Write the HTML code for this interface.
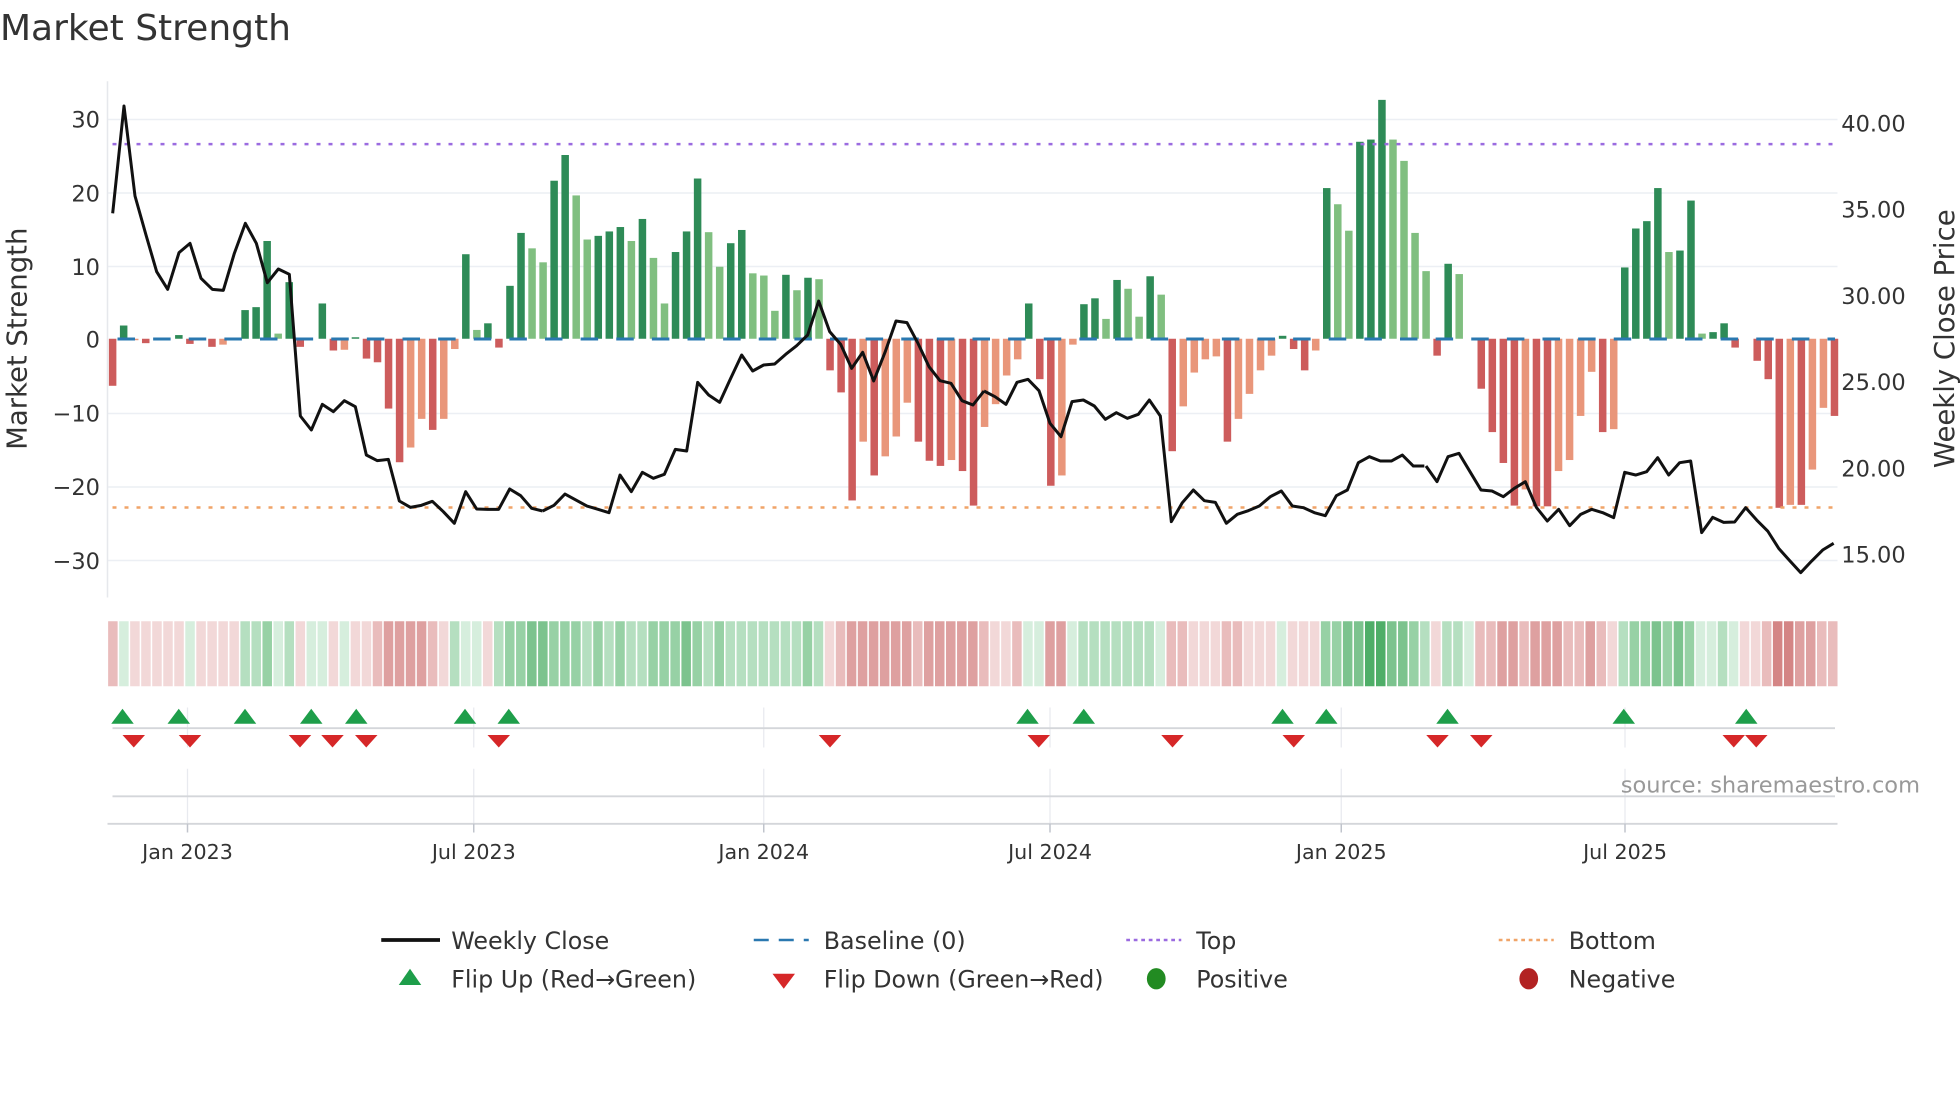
<!DOCTYPE html>
<html><head><meta charset="utf-8"><style>
html,body{margin:0;padding:0;background:#fff;overflow:hidden}
svg{display:block}
text{font-family:"DejaVu Sans","Liberation Sans",sans-serif;fill:#333}
.a{fill:#2e8b57}.b{fill:#80bf80}.c{fill:#cd5c5c}.d{fill:#e9967a}
.g1{fill:#d6eedd}.g2{fill:#b5dfc0}.g3{fill:#97d1a5}.g4{fill:#7cc38e}.g5{fill:#4fae68}
.r1{fill:#f2d8d8}.r2{fill:#e9bcbc}.r3{fill:#dea0a0}.r4{fill:#d48585}
</style></head><body>
<svg width="1960" height="1102" viewBox="0 0 1568 881.6" xmlns="http://www.w3.org/2000/svg">
<text x="0" y="32" font-size="28.8">Market Strength</text>
<g stroke="#eceff4" stroke-width="1.2">
<line x1="86" x2="1470" y1="95.6" y2="95.6"/><line x1="86" x2="1470" y1="154.4" y2="154.4"/><line x1="86" x2="1470" y1="213.2" y2="213.2"/><line x1="86" x2="1470" y1="330.8" y2="330.8"/><line x1="86" x2="1470" y1="389.6" y2="389.6"/><line x1="86" x2="1470" y1="448.4" y2="448.4"/>
</g>
<line x1="86" x2="86" y1="65" y2="478" stroke="#e6e8ec" stroke-width="1.2"/>
<g font-size="18" text-anchor="end">
<text x="80" y="102">30</text><text x="80" y="161">20</text><text x="80" y="220">10</text><text x="80" y="278">0</text><text x="80" y="337">−10</text><text x="80" y="396">−20</text><text x="80" y="455">−30</text>
</g>
<g font-size="18">
<text x="1473" y="105">40.00</text><text x="1473" y="174">35.00</text><text x="1473" y="243">30.00</text><text x="1473" y="312">25.00</text><text x="1473" y="381">20.00</text><text x="1473" y="450">15.00</text>
</g>
<text transform="translate(21,271) rotate(-90)" font-size="22" text-anchor="middle">Market Strength</text>
<text transform="translate(1563,271) rotate(-90)" font-size="22" text-anchor="middle">Weekly Close Price</text>
<g transform="translate(90.1,271) scale(8.83,-5.88)">
<rect class="c" x="-.34" y="-6.4" width=".68" height="6.4"/>
<rect class="a" x=".66" y="0" width=".68" height="1.8"/>
<rect class="d" x="1.66" y="-.2" width=".68" height=".2"/>
<rect class="c" x="2.66" y="-.6" width=".68" height=".6"/>
<rect class="a" x="5.66" y="0" width=".68" height=".5"/>
<rect class="c" x="6.66" y="-.7" width=".68" height=".7"/>
<rect class="c" x="8.66" y="-1.1" width=".68" height="1.1"/>
<rect class="d" x="9.66" y="-.8" width=".68" height=".8"/>
<rect class="c" x="10.66" y="-.1" width=".68" height=".1"/>
<rect class="a" x="11.66" y="0" width=".68" height="3.9"/>
<rect class="a" x="12.66" y="0" width=".68" height="4.3"/>
<rect class="a" x="13.66" y="0" width=".68" height="13.3"/>
<rect class="b" x="14.66" y="0" width=".68" height=".7"/>
<rect class="a" x="15.66" y="0" width=".68" height="7.7"/>
<rect class="c" x="16.66" y="-1.1" width=".68" height="1.1"/>
<rect class="a" x="18.66" y="0" width=".68" height="4.8"/>
<rect class="c" x="19.66" y="-1.6" width=".68" height="1.6"/>
<rect class="d" x="20.66" y="-1.5" width=".68" height="1.5"/>
<rect class="a" x="21.66" y="0" width=".68" height=".2"/>
<rect class="c" x="22.66" y="-2.7" width=".68" height="2.7"/>
<rect class="c" x="23.66" y="-3.2" width=".68" height="3.2"/>
<rect class="c" x="24.66" y="-9.5" width=".68" height="9.5"/>
<rect class="c" x="25.66" y="-16.8" width=".68" height="16.8"/>
<rect class="d" x="26.66" y="-14.8" width=".68" height="14.8"/>
<rect class="d" x="27.66" y="-10.9" width=".68" height="10.9"/>
<rect class="c" x="28.66" y="-12.4" width=".68" height="12.4"/>
<rect class="d" x="29.66" y="-10.9" width=".68" height="10.9"/>
<rect class="d" x="30.66" y="-1.4" width=".68" height="1.4"/>
<rect class="a" x="31.66" y="0" width=".68" height="11.5"/>
<rect class="b" x="32.66" y="0" width=".68" height="1.2"/>
<rect class="a" x="33.66" y="0" width=".68" height="2.1"/>
<rect class="c" x="34.66" y="-1.2" width=".68" height="1.2"/>
<rect class="a" x="35.66" y="0" width=".68" height="7.2"/>
<rect class="a" x="36.66" y="0" width=".68" height="14.4"/>
<rect class="b" x="37.66" y="0" width=".68" height="12.3"/>
<rect class="b" x="38.66" y="0" width=".68" height="10.4"/>
<rect class="a" x="39.66" y="0" width=".68" height="21.5"/>
<rect class="a" x="40.66" y="0" width=".68" height="25"/>
<rect class="b" x="41.66" y="0" width=".68" height="19.5"/>
<rect class="b" x="42.66" y="0" width=".68" height="13.5"/>
<rect class="a" x="43.66" y="0" width=".68" height="14"/>
<rect class="a" x="44.66" y="0" width=".68" height="14.6"/>
<rect class="a" x="45.66" y="0" width=".68" height="15.2"/>
<rect class="b" x="46.66" y="0" width=".68" height="13.3"/>
<rect class="a" x="47.66" y="0" width=".68" height="16.3"/>
<rect class="b" x="48.66" y="0" width=".68" height="11"/>
<rect class="b" x="49.66" y="0" width=".68" height="4.8"/>
<rect class="a" x="50.66" y="0" width=".68" height="11.8"/>
<rect class="a" x="51.66" y="0" width=".68" height="14.6"/>
<rect class="a" x="52.66" y="0" width=".68" height="21.8"/>
<rect class="b" x="53.66" y="0" width=".68" height="14.5"/>
<rect class="b" x="54.66" y="0" width=".68" height="9.8"/>
<rect class="a" x="55.66" y="0" width=".68" height="13"/>
<rect class="a" x="56.66" y="0" width=".68" height="14.8"/>
<rect class="b" x="57.66" y="0" width=".68" height="8.9"/>
<rect class="b" x="58.66" y="0" width=".68" height="8.6"/>
<rect class="b" x="59.66" y="0" width=".68" height="3.8"/>
<rect class="a" x="60.66" y="0" width=".68" height="8.7"/>
<rect class="b" x="61.66" y="0" width=".68" height="6.6"/>
<rect class="a" x="62.66" y="0" width=".68" height="8.3"/>
<rect class="b" x="63.66" y="0" width=".68" height="8.1"/>
<rect class="c" x="64.66" y="-4.3" width=".68" height="4.3"/>
<rect class="c" x="65.66" y="-7.3" width=".68" height="7.3"/>
<rect class="c" x="66.66" y="-22" width=".68" height="22"/>
<rect class="d" x="67.66" y="-14" width=".68" height="14"/>
<rect class="c" x="68.66" y="-18.6" width=".68" height="18.6"/>
<rect class="d" x="69.66" y="-16" width=".68" height="16"/>
<rect class="d" x="70.66" y="-13.3" width=".68" height="13.3"/>
<rect class="d" x="71.66" y="-8.7" width=".68" height="8.7"/>
<rect class="c" x="72.66" y="-14" width=".68" height="14"/>
<rect class="c" x="73.66" y="-16.6" width=".68" height="16.6"/>
<rect class="c" x="74.66" y="-17.3" width=".68" height="17.3"/>
<rect class="d" x="75.66" y="-16.5" width=".68" height="16.5"/>
<rect class="c" x="76.66" y="-18" width=".68" height="18"/>
<rect class="c" x="77.66" y="-22.7" width=".68" height="22.7"/>
<rect class="d" x="78.66" y="-12" width=".68" height="12"/>
<rect class="d" x="79.66" y="-8.9" width=".68" height="8.9"/>
<rect class="d" x="80.66" y="-5" width=".68" height="5"/>
<rect class="d" x="81.66" y="-2.8" width=".68" height="2.8"/>
<rect class="a" x="82.66" y="0" width=".68" height="4.8"/>
<rect class="c" x="83.66" y="-5.5" width=".68" height="5.5"/>
<rect class="c" x="84.66" y="-20" width=".68" height="20"/>
<rect class="d" x="85.66" y="-18.6" width=".68" height="18.6"/>
<rect class="d" x="86.66" y="-.8" width=".68" height=".8"/>
<rect class="a" x="87.66" y="0" width=".68" height="4.7"/>
<rect class="a" x="88.66" y="0" width=".68" height="5.5"/>
<rect class="b" x="89.66" y="0" width=".68" height="2.7"/>
<rect class="a" x="90.66" y="0" width=".68" height="8"/>
<rect class="b" x="91.66" y="0" width=".68" height="6.8"/>
<rect class="b" x="92.66" y="0" width=".68" height="3"/>
<rect class="a" x="93.66" y="0" width=".68" height="8.5"/>
<rect class="b" x="94.66" y="0" width=".68" height="6"/>
<rect class="c" x="95.66" y="-15.3" width=".68" height="15.3"/>
<rect class="d" x="96.66" y="-9.2" width=".68" height="9.2"/>
<rect class="d" x="97.66" y="-4.6" width=".68" height="4.6"/>
<rect class="d" x="98.66" y="-2.8" width=".68" height="2.8"/>
<rect class="d" x="99.66" y="-2.4" width=".68" height="2.4"/>
<rect class="c" x="100.66" y="-14" width=".68" height="14"/>
<rect class="d" x="101.66" y="-10.9" width=".68" height="10.9"/>
<rect class="d" x="102.66" y="-7.5" width=".68" height="7.5"/>
<rect class="d" x="103.66" y="-4.3" width=".68" height="4.3"/>
<rect class="d" x="104.66" y="-2.3" width=".68" height="2.3"/>
<rect class="a" x="105.66" y="0" width=".68" height=".4"/>
<rect class="c" x="106.66" y="-1.4" width=".68" height="1.4"/>
<rect class="c" x="107.66" y="-4.3" width=".68" height="4.3"/>
<rect class="d" x="108.66" y="-1.6" width=".68" height="1.6"/>
<rect class="a" x="109.66" y="0" width=".68" height="20.5"/>
<rect class="b" x="110.66" y="0" width=".68" height="18.3"/>
<rect class="b" x="111.66" y="0" width=".68" height="14.7"/>
<rect class="a" x="112.66" y="0" width=".68" height="26.8"/>
<rect class="a" x="113.66" y="0" width=".68" height="27.1"/>
<rect class="a" x="114.66" y="0" width=".68" height="32.5"/>
<rect class="b" x="115.66" y="0" width=".68" height="27.1"/>
<rect class="b" x="116.66" y="0" width=".68" height="24.2"/>
<rect class="b" x="117.66" y="0" width=".68" height="14.4"/>
<rect class="b" x="118.66" y="0" width=".68" height="9.2"/>
<rect class="c" x="119.66" y="-2.3" width=".68" height="2.3"/>
<rect class="a" x="120.66" y="0" width=".68" height="10.2"/>
<rect class="b" x="121.66" y="0" width=".68" height="8.8"/>
<rect class="c" x="123.66" y="-6.8" width=".68" height="6.8"/>
<rect class="c" x="124.66" y="-12.7" width=".68" height="12.7"/>
<rect class="c" x="125.66" y="-16.9" width=".68" height="16.9"/>
<rect class="c" x="126.66" y="-22.7" width=".68" height="22.7"/>
<rect class="d" x="127.66" y="-20.5" width=".68" height="20.5"/>
<rect class="c" x="128.66" y="-22.8" width=".68" height="22.8"/>
<rect class="c" x="129.66" y="-22.8" width=".68" height="22.8"/>
<rect class="d" x="130.66" y="-18" width=".68" height="18"/>
<rect class="d" x="131.66" y="-16.5" width=".68" height="16.5"/>
<rect class="d" x="132.66" y="-10.5" width=".68" height="10.5"/>
<rect class="d" x="133.66" y="-4.5" width=".68" height="4.5"/>
<rect class="c" x="134.66" y="-12.7" width=".68" height="12.7"/>
<rect class="d" x="135.66" y="-12.3" width=".68" height="12.3"/>
<rect class="a" x="136.66" y="0" width=".68" height="9.7"/>
<rect class="a" x="137.66" y="0" width=".68" height="15"/>
<rect class="a" x="138.66" y="0" width=".68" height="16"/>
<rect class="a" x="139.66" y="0" width=".68" height="20.5"/>
<rect class="b" x="140.66" y="0" width=".68" height="11.8"/>
<rect class="a" x="141.66" y="0" width=".68" height="12"/>
<rect class="a" x="142.66" y="0" width=".68" height="18.8"/>
<rect class="b" x="143.66" y="0" width=".68" height=".7"/>
<rect class="a" x="144.66" y="0" width=".68" height=".9"/>
<rect class="a" x="145.66" y="0" width=".68" height="2.1"/>
<rect class="c" x="146.66" y="-1.2" width=".68" height="1.2"/>
<rect class="c" x="148.66" y="-3" width=".68" height="3"/>
<rect class="c" x="149.66" y="-5.5" width=".68" height="5.5"/>
<rect class="c" x="150.66" y="-23" width=".68" height="23"/>
<rect class="d" x="151.66" y="-22.6" width=".68" height="22.6"/>
<rect class="c" x="152.66" y="-22.6" width=".68" height="22.6"/>
<rect class="d" x="153.66" y="-17.8" width=".68" height="17.8"/>
<rect class="d" x="154.66" y="-9.4" width=".68" height="9.4"/>
<rect class="c" x="155.66" y="-10.5" width=".68" height="10.5"/>
</g>
<line x1="90" x2="1468" y1="271.2" y2="271.2" stroke="#2a78b0" stroke-width="2.4" stroke-dasharray="14 14.5" stroke-dashoffset="24.5"/>
<line x1="90" x2="1468" y1="115.3" y2="115.3" stroke="#9b6be0" stroke-width="2" stroke-dasharray="3.2 6.4"/>
<line x1="90" x2="1468" y1="406" y2="406" stroke="#f0a468" stroke-width="2" stroke-dasharray="3.2 6.4"/>
<g fill="none" stroke="#111" stroke-width="3" stroke-linejoin="round">
<polyline vector-effect="non-scaling-stroke" transform="translate(80,72) scale(.26667)" points="38,370 72,48 105,318 138,435 170,545 203,598 237,488 270,460 303,565 337,598 370,601 403,490 436,400 469,460 502,578 535,537 568,553 601,978 634,1020 667,943 700,965 733,932 766,950 799,1095 832,1112 865,1108 898,1233 931,1252 964,1246 997,1234 1030,1265 1063,1300 1097,1205 1130,1257 1163,1258 1196,1258 1229,1197 1262,1217 1295,1255 1328,1263"/>
<polyline vector-effect="non-scaling-stroke" transform="translate(432,72) scale(.26667)" points="8,1263 42,1246 75,1212 108,1230 141,1248 174,1258 207,1268 240,1155 274,1205 307,1147 340,1165 373,1153 406,1078 440,1083 473,877 506,915 539,937 572,865 605,795 638,843 671,825 704,822 737,793 770,767 803,735 836,633 869,725 902,763 935,835 968,787 1001,873 1035,787 1068,693 1101,698 1134,760 1167,830 1200,872 1233,880 1266,932 1299,945 1332,903"/>
<polyline vector-effect="non-scaling-stroke" transform="translate(784,72) scale(.26667)" points="12,903 45,920 78,943 111,877 144,868 177,902 210,1000 243,1040 276,935 310,930 343,948 376,988 409,968 442,985 475,973 508,930 541,978 574,1295 607,1238 640,1200 673,1232 706,1237 739,1300 772,1273 805,1262 838,1248 871,1220 904,1203 937,1248 970,1253 1003,1268 1036,1277 1069,1217 1102,1200 1135,1118 1168,1100 1201,1113 1234,1113 1267,1095 1300,1128 1333,1128"/>
<polyline vector-effect="non-scaling-stroke" transform="translate(1136,72) scale(.26667)" points="18,1128 51,1175 84,1100 117,1090 150,1145 183,1200 216,1203 250,1220 283,1195 316,1175 349,1252 382,1293 416,1258 449,1307 482,1273 515,1258 548,1268 581,1283 614,1147 647,1155 680,1145 713,1103 746,1155 779,1118 812,1113 845,1328 878,1282 911,1297 944,1296 977,1253 1010,1290 1043,1323 1076,1375 1109,1412 1142,1448 1175,1413 1208,1380 1241,1360"/>
</g>
<g transform="translate(86.5,497)">
<rect class="r2" x="0" width="7.6" height="52"/><rect class="g1" x="8.82" width="7.6" height="52"/><rect class="r1" x="17.64" width="7.6" height="52"/><rect class="r1" x="26.46" width="7.6" height="52"/><rect class="r1" x="35.28" width="7.6" height="52"/><rect class="r1" x="44.1" width="7.6" height="52"/><rect class="r1" x="52.92" width="7.6" height="52"/><rect class="g1" x="61.74" width="7.6" height="52"/><rect class="r1" x="70.56" width="7.6" height="52"/><rect class="r1" x="79.38" width="7.6" height="52"/>
<rect class="r1" x="88.2" width="7.6" height="52"/><rect class="r1" x="97.02" width="7.6" height="52"/><rect class="g2" x="105.84" width="7.6" height="52"/><rect class="g2" x="114.66" width="7.6" height="52"/><rect class="g3" x="123.48" width="7.6" height="52"/><rect class="g1" x="132.3" width="7.6" height="52"/><rect class="g2" x="141.12" width="7.6" height="52"/><rect class="r1" x="149.94" width="7.6" height="52"/><rect class="g1" x="158.76" width="7.6" height="52"/><rect class="g1" x="167.58" width="7.6" height="52"/>
<rect class="r1" x="176.4" width="7.6" height="52"/><rect class="g1" x="185.22" width="7.6" height="52"/><rect class="r1" x="194.04" width="7.6" height="52"/><rect class="r1" x="202.86" width="7.6" height="52"/><rect class="r2" x="211.68" width="7.6" height="52"/><rect class="r3" x="220.5" width="7.6" height="52"/><rect class="r3" x="229.32" width="7.6" height="52"/><rect class="r3" x="238.14" width="7.6" height="52"/><rect class="r3" x="246.96" width="7.6" height="52"/><rect class="r2" x="255.78" width="7.6" height="52"/>
<rect class="r1" x="264.6" width="7.6" height="52"/><rect class="g2" x="273.42" width="7.6" height="52"/><rect class="g1" x="282.24" width="7.6" height="52"/><rect class="g1" x="291.06" width="7.6" height="52"/><rect class="r1" x="299.88" width="7.6" height="52"/><rect class="g2" x="308.7" width="7.6" height="52"/><rect class="g3" x="317.52" width="7.6" height="52"/><rect class="g3" x="326.34" width="7.6" height="52"/><rect class="g4" x="335.16" width="7.6" height="52"/><rect class="g4" x="343.98" width="7.6" height="52"/>
<rect class="g3" x="352.8" width="7.6" height="52"/><rect class="g3" x="361.62" width="7.6" height="52"/><rect class="g3" x="370.44" width="7.6" height="52"/><rect class="g2" x="379.26" width="7.6" height="52"/><rect class="g3" x="388.08" width="7.6" height="52"/><rect class="g2" x="396.9" width="7.6" height="52"/><rect class="g3" x="405.72" width="7.6" height="52"/><rect class="g2" x="414.54" width="7.6" height="52"/><rect class="g2" x="423.36" width="7.6" height="52"/><rect class="g3" x="432.18" width="7.6" height="52"/>
<rect class="g3" x="441" width="7.6" height="52"/><rect class="g3" x="449.82" width="7.6" height="52"/><rect class="g4" x="458.64" width="7.6" height="52"/><rect class="g3" x="467.46" width="7.6" height="52"/><rect class="g2" x="476.28" width="7.6" height="52"/><rect class="g3" x="485.1" width="7.6" height="52"/><rect class="g2" x="493.92" width="7.6" height="52"/><rect class="g2" x="502.74" width="7.6" height="52"/><rect class="g2" x="511.56" width="7.6" height="52"/><rect class="g2" x="520.38" width="7.6" height="52"/>
<rect class="g2" x="529.2" width="7.6" height="52"/><rect class="g2" x="538.02" width="7.6" height="52"/><rect class="g2" x="546.84" width="7.6" height="52"/><rect class="g3" x="555.66" width="7.6" height="52"/><rect class="g2" x="564.48" width="7.6" height="52"/><rect class="r1" x="573.3" width="7.6" height="52"/><rect class="r2" x="582.12" width="7.6" height="52"/><rect class="r3" x="590.94" width="7.6" height="52"/><rect class="r3" x="599.76" width="7.6" height="52"/><rect class="r3" x="608.58" width="7.6" height="52"/>
<rect class="r3" x="617.4" width="7.6" height="52"/><rect class="r3" x="626.22" width="7.6" height="52"/><rect class="r3" x="635.04" width="7.6" height="52"/><rect class="r2" x="643.86" width="7.6" height="52"/><rect class="r3" x="652.68" width="7.6" height="52"/><rect class="r3" x="661.5" width="7.6" height="52"/><rect class="r3" x="670.32" width="7.6" height="52"/><rect class="r3" x="679.14" width="7.6" height="52"/><rect class="r3" x="687.96" width="7.6" height="52"/><rect class="r2" x="696.78" width="7.6" height="52"/>
<rect class="r1" x="705.6" width="7.6" height="52"/><rect class="r1" x="714.42" width="7.6" height="52"/><rect class="r2" x="723.24" width="7.6" height="52"/><rect class="g1" x="732.06" width="7.6" height="52"/><rect class="g1" x="740.88" width="7.6" height="52"/><rect class="r3" x="749.7" width="7.6" height="52"/><rect class="r3" x="758.52" width="7.6" height="52"/><rect class="g1" x="767.34" width="7.6" height="52"/><rect class="g2" x="776.16" width="7.6" height="52"/><rect class="g2" x="784.98" width="7.6" height="52"/>
<rect class="g2" x="793.8" width="7.6" height="52"/><rect class="g2" x="802.62" width="7.6" height="52"/><rect class="g2" x="811.44" width="7.6" height="52"/><rect class="g2" x="820.26" width="7.6" height="52"/><rect class="g2" x="829.08" width="7.6" height="52"/><rect class="g1" x="837.9" width="7.6" height="52"/><rect class="r2" x="846.72" width="7.6" height="52"/><rect class="r2" x="855.54" width="7.6" height="52"/><rect class="r1" x="864.36" width="7.6" height="52"/><rect class="r1" x="873.18" width="7.6" height="52"/>
<rect class="r1" x="882" width="7.6" height="52"/><rect class="r2" x="890.82" width="7.6" height="52"/><rect class="r2" x="899.64" width="7.6" height="52"/><rect class="r1" x="908.46" width="7.6" height="52"/><rect class="r1" x="917.28" width="7.6" height="52"/><rect class="r1" x="926.1" width="7.6" height="52"/><rect class="g1" x="934.92" width="7.6" height="52"/><rect class="r1" x="943.74" width="7.6" height="52"/><rect class="r1" x="952.56" width="7.6" height="52"/><rect class="r1" x="961.38" width="7.6" height="52"/>
<rect class="g3" x="970.2" width="7.6" height="52"/><rect class="g3" x="979.02" width="7.6" height="52"/><rect class="g4" x="987.84" width="7.6" height="52"/><rect class="g4" x="996.66" width="7.6" height="52"/><rect class="g5" x="1005.48" width="7.6" height="52"/><rect class="g5" x="1014.3" width="7.6" height="52"/><rect class="g4" x="1023.12" width="7.6" height="52"/><rect class="g4" x="1031.94" width="7.6" height="52"/><rect class="g3" x="1040.76" width="7.6" height="52"/><rect class="g2" x="1049.58" width="7.6" height="52"/>
<rect class="r1" x="1058.4" width="7.6" height="52"/><rect class="g2" x="1067.22" width="7.6" height="52"/><rect class="g2" x="1076.04" width="7.6" height="52"/><rect class="g1" x="1084.86" width="7.6" height="52"/><rect class="r2" x="1093.68" width="7.6" height="52"/><rect class="r2" x="1102.5" width="7.6" height="52"/><rect class="r3" x="1111.32" width="7.6" height="52"/><rect class="r3" x="1120.14" width="7.6" height="52"/><rect class="r2" x="1128.96" width="7.6" height="52"/><rect class="r3" x="1137.78" width="7.6" height="52"/>
<rect class="r3" x="1146.6" width="7.6" height="52"/><rect class="r3" x="1155.42" width="7.6" height="52"/><rect class="r2" x="1164.24" width="7.6" height="52"/><rect class="r2" x="1173.06" width="7.6" height="52"/><rect class="r3" x="1181.88" width="7.6" height="52"/><rect class="r2" x="1190.7" width="7.6" height="52"/><rect class="r1" x="1199.52" width="7.6" height="52"/><rect class="g2" x="1208.34" width="7.6" height="52"/><rect class="g3" x="1217.16" width="7.6" height="52"/><rect class="g3" x="1225.98" width="7.6" height="52"/>
<rect class="g4" x="1234.8" width="7.6" height="52"/><rect class="g3" x="1243.62" width="7.6" height="52"/><rect class="g4" x="1252.44" width="7.6" height="52"/><rect class="g3" x="1261.26" width="7.6" height="52"/><rect class="g1" x="1270.08" width="7.6" height="52"/><rect class="g1" x="1278.9" width="7.6" height="52"/><rect class="g2" x="1287.72" width="7.6" height="52"/><rect class="g1" x="1296.54" width="7.6" height="52"/><rect class="r1" x="1305.36" width="7.6" height="52"/><rect class="r1" x="1314.18" width="7.6" height="52"/>
<rect class="r2" x="1323" width="7.6" height="52"/><rect class="r4" x="1331.82" width="7.6" height="52"/><rect class="r4" x="1340.64" width="7.6" height="52"/><rect class="r3" x="1349.46" width="7.6" height="52"/><rect class="r3" x="1358.28" width="7.6" height="52"/><rect class="r2" x="1367.1" width="7.6" height="52"/><rect class="r2" x="1375.92" width="7.6" height="52"/>
</g>
<g stroke="#e8eaef" stroke-width="1">
<line x1="150" x2="150" y1="566" y2="598"/><line x1="379" x2="379" y1="566" y2="598"/><line x1="611" x2="611" y1="566" y2="598"/><line x1="840" x2="840" y1="566" y2="598"/><line x1="1073" x2="1073" y1="566" y2="598"/><line x1="1300" x2="1300" y1="566" y2="598"/>
<line x1="150" x2="150" y1="615" y2="659"/><line x1="379" x2="379" y1="615" y2="659"/><line x1="611" x2="611" y1="615" y2="659"/><line x1="840" x2="840" y1="615" y2="659"/><line x1="1073" x2="1073" y1="615" y2="659"/><line x1="1300" x2="1300" y1="615" y2="659"/>
</g>
<line x1="90" x2="1468" y1="582.5" y2="582.5" stroke="#d4d6da" stroke-width="1.5"/>
<line x1="90" x2="1468" y1="637" y2="637" stroke="#d4d6da" stroke-width="1.5"/>
<line x1="86" x2="1470" y1="659" y2="659" stroke="#d4d6da" stroke-width="1.5"/>
<g stroke="#c0c4cc" stroke-width="1.2">
<line x1="150" x2="150" y1="659" y2="666"/><line x1="379" x2="379" y1="659" y2="666"/><line x1="611" x2="611" y1="659" y2="666"/><line x1="840" x2="840" y1="659" y2="666"/><line x1="1073" x2="1073" y1="659" y2="666"/><line x1="1300" x2="1300" y1="659" y2="666"/>
</g>
<g fill="#1e9e4a">
<path d="M89 579 L98 567 L107 579Z"/><path d="M134 579 L143 567 L152 579Z"/><path d="M187 579 L196 567 L205 579Z"/><path d="M240 579 L249 567 L258 579Z"/><path d="M276 579 L285 567 L294 579Z"/><path d="M363 579 L372 567 L381 579Z"/><path d="M398 579 L407 567 L416 579Z"/><path d="M813 579 L822 567 L831 579Z"/><path d="M858 579 L867 567 L876 579Z"/><path d="M1017 579 L1026 567 L1035 579Z"/><path d="M1052 579 L1061 567 L1070 579Z"/><path d="M1149 579 L1158 567 L1167 579Z"/><path d="M1290 579 L1299 567 L1308 579Z"/><path d="M1388 579 L1397 567 L1406 579Z"/>
</g>
<g fill="#d62728">
<path d="M98 588 L116 588 L107 598Z"/><path d="M143 588 L161 588 L152 598Z"/><path d="M231 588 L249 588 L240 598Z"/><path d="M257 588 L275 588 L266 598Z"/><path d="M284 588 L302 588 L293 598Z"/><path d="M390 588 L408 588 L399 598Z"/><path d="M655 588 L673 588 L664 598Z"/><path d="M822 588 L840 588 L831 598Z"/><path d="M929 588 L947 588 L938 598Z"/><path d="M1026 588 L1044 588 L1035 598Z"/><path d="M1141 588 L1159 588 L1150 598Z"/><path d="M1176 588 L1194 588 L1185 598Z"/><path d="M1378 588 L1396 588 L1387 598Z"/><path d="M1396 588 L1414 588 L1405 598Z"/>
</g>
<text x="1536" y="634" font-size="18" text-anchor="end" style="fill:#999">source: sharemaestro.com</text>
<g font-size="16.5" text-anchor="middle">
<text x="150" y="687">Jan 2023</text><text x="379" y="687">Jul 2023</text><text x="611" y="687">Jan 2024</text><text x="840" y="687">Jul 2024</text><text x="1073" y="687">Jan 2025</text><text x="1300" y="687">Jul 2025</text>
</g>
<line x1="305" x2="352" y1="752" y2="752" stroke="#111" stroke-width="3"/>
<line x1="603" x2="647" y1="752" y2="752" stroke="#2a78b0" stroke-width="2" stroke-dasharray="12 8"/>
<line x1="901" x2="945" y1="752" y2="752" stroke="#9b6be0" stroke-width="2" stroke-dasharray="3 3"/>
<line x1="1199" x2="1243" y1="752" y2="752" stroke="#f0a468" stroke-width="2" stroke-dasharray="3 3"/>
<path d="M319 788 L328 775 L337 788Z" fill="#1e9e4a"/>
<path d="M618 779 L636 779 L627 791Z" fill="#d62728"/>
<ellipse cx="925" cy="783" rx="7.5" ry="8.5" fill="#228b22"/>
<ellipse cx="1223" cy="783" rx="7.5" ry="8.5" fill="#b22222"/>
<g font-size="19">
<text x="361" y="759">Weekly Close</text><text x="659" y="759">Baseline (0)</text><text x="957" y="759">Top</text><text x="1255" y="759">Bottom</text>
<text x="361" y="790">Flip Up (Red→Green)</text><text x="659" y="790">Flip Down (Green→Red)</text><text x="957" y="790">Positive</text><text x="1255" y="790">Negative</text>
</g>
</svg>
</body></html>
